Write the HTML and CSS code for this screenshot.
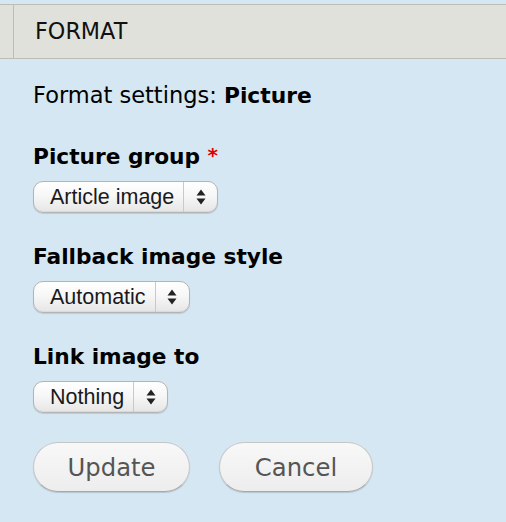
FILE: index.html
```html
<!DOCTYPE html>
<html>
<head>
<meta charset="utf-8">
<link rel="stylesheet" href="styles.css">
</head>
<body>
<div class="header">
  <div class="handle"></div>
  <div class="title">FORMAT</div>
</div>
<div class="panel">
  <div class="summary">Format settings: <strong>Picture</strong></div>
  <div class="field">
    <div class="label">Picture group <span class="req">*</span></div>
    <div class="select"><span class="value">Article image</span><span class="arrows"><svg width="10" height="16" viewBox="0 0 10 16"><path d="M5 0.5 L9.5 6.5 L0.5 6.5 Z M5 15.5 L9.5 9.5 L0.5 9.5 Z" fill="#222"/></svg></span></div>
  </div>
  <div class="field">
    <div class="label">Fallback image style</div>
    <div class="select"><span class="value">Automatic</span><span class="arrows"><svg width="10" height="16" viewBox="0 0 10 16"><path d="M5 0.5 L9.5 6.5 L0.5 6.5 Z M5 15.5 L9.5 9.5 L0.5 9.5 Z" fill="#222"/></svg></span></div>
  </div>
  <div class="field">
    <div class="label">Link image to</div>
    <div class="select"><span class="value">Nothing</span><span class="arrows"><svg width="10" height="16" viewBox="0 0 10 16"><path d="M5 0.5 L9.5 6.5 L0.5 6.5 Z M5 15.5 L9.5 9.5 L0.5 9.5 Z" fill="#222"/></svg></span></div>
  </div>
  <div class="actions">
    <button class="btn btn-update">Update</button>
    <button class="btn btn-cancel">Cancel</button>
  </div>
</div>
</body>
</html>
```
FILE: styles.css
```css
html, body {
  margin: 0;
  padding: 0;
  background: #d4e7f3;
}
body {
  font-family: "DejaVu Sans", "Liberation Sans", sans-serif;
  color: #000;
  width: 506px;
  height: 522px;
  overflow: hidden;
}
.header {
  margin-top: 4px;
  background: #e1e1dc;
  border-top: 1px solid #bdbdb7;
  border-bottom: 1px solid #bdbdb7;
  height: 53px;
  display: flex;
}
.handle {
  width: 13px;
  border-right: 1px solid #bdbdb7;
  flex: none;
}
.title {
  padding-left: 21px;
  line-height: 53px;
  font-size: 22.3px;
  color: #111;
}
.panel {
  background: #d4e7f3;
  padding: 21px 0 40px 33px;
}
.summary {
  font-size: 22.5px;
  line-height: 30px;
  margin-bottom: 29px;
}
.summary strong {
  font-weight: bold;
  font-size: 21.8px;
}
.field {
  margin-bottom: 29px;
}
.label {
  font-size: 21.7px;
  font-weight: bold;
  line-height: 30px;
  margin-bottom: 9px;
}
.req {
  color: #e00000;
  font-size: 20px;
  vertical-align: 2px;
}
.select {
  display: inline-flex;
  align-items: stretch;
  height: 32px;
  box-sizing: border-box;
  border: 1px solid #b4b4b4;
  border-radius: 10px;
  background: linear-gradient(to bottom, #ffffff 0%, #f7f7f7 45%, #e6e6e6 100%);
  box-shadow: inset 0 -1px 1px rgba(0,0,0,0.06), 0 1px 1px rgba(0,0,0,0.12);
  font-family: "Liberation Sans", Arial, sans-serif;
  font-size: 21.5px;
  color: #1a1a1a;
}
.value {
  padding: 0 9px 0 16px;
  line-height: 30px;
}
.arrows {
  width: 33px;
  border-left: 1px solid #c9c9c9;
  display: flex;
  align-items: center;
  justify-content: center;
}
.arrows svg {
  display: block;
}
.actions {
  display: flex;
  gap: 29px;
}
.btn {
  font-family: "DejaVu Sans", sans-serif;
  font-size: 24.3px;
  color: #555;
  height: 50px;
  border: 1px solid #c6c6c6;
  border-bottom-color: #a8a8a8;
  border-radius: 25px;
  background: linear-gradient(to bottom, #f8f8f8 0%, #ededed 100%);
  box-shadow: 0 1px 1px rgba(0,0,0,0.15);
  padding: 0;
  box-sizing: border-box;
}
.btn-update {
  width: 157px;
}
.btn-cancel {
  width: 154px;
}
```
